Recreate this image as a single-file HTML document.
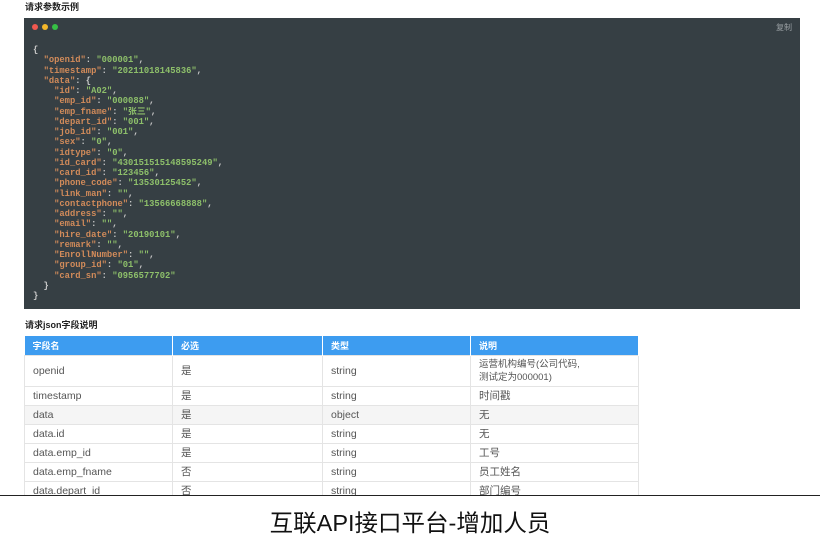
<!DOCTYPE html>
<html><head><meta charset="utf-8"><style>
*{margin:0;padding:0;box-sizing:border-box}
body{width:820px;height:540px;background:#fff;position:relative;overflow:hidden;font-family:"Liberation Sans","Noto Sans CJK SC",sans-serif}
.h{position:absolute;left:25px;font-size:9px;font-weight:bold;color:#222}
.code{position:absolute;left:24px;top:18px;width:776px;height:291px;background:#363f44}
.dot{position:absolute;top:6px;width:6px;height:6px;border-radius:50%}
.copy{position:absolute;right:8px;top:4px;font-size:8px;color:#9aa0a4}
pre{position:absolute;left:9px;top:27px;font-family:"Liberation Mono","Noto Sans CJK SC",monospace;font-size:8.8px;line-height:10.25px;color:#c9c9c9;font-weight:bold}
.k{color:#d28b5a}.v{color:#8dbf6a}
table{position:absolute;left:24px;top:336px;width:615px;border-collapse:collapse;font-size:10.5px;color:#555}
th{background:#3d9cf0;color:#fff;text-align:left;font-size:9px;height:19px;padding-left:8px;border-right:1px solid #fff}
td{padding-left:8px;border:1px solid #e4e4e4;height:19px;vertical-align:middle}
tr.g td{background:#f5f5f5}
.line{position:absolute;left:0;top:495px;width:820px;height:1px;background:#222}
.cap{position:absolute;left:0;width:820px;top:504px;text-align:center;font-size:23.5px;color:#111;font-family:"Liberation Sans","Noto Sans CJK SC",sans-serif}
.cut{position:absolute;left:0;top:496px;width:820px;height:44px;background:#fff}
</style></head><body>
<div class="h" style="top:0">请求参数示例</div>
<div class="code">
<div class="dot" style="left:8px;background:#f0584f"></div>
<div class="dot" style="left:18px;background:#f5b82a"></div>
<div class="dot" style="left:28px;background:#36c045"></div>
<div class="copy">复制</div>
<pre>{
  <span class="k">"openid"</span>: <span class="v">"000001"</span>,
  <span class="k">"timestamp"</span>: <span class="v">"20211018145836"</span>,
  <span class="k">"data"</span>: {
    <span class="k">"id"</span>: <span class="v">"A02"</span>,
    <span class="k">"emp_id"</span>: <span class="v">"000088"</span>,
    <span class="k">"emp_fname"</span>: <span class="v">"张三"</span>,
    <span class="k">"depart_id"</span>: <span class="v">"001"</span>,
    <span class="k">"job_id"</span>: <span class="v">"001"</span>,
    <span class="k">"sex"</span>: <span class="v">"0"</span>,
    <span class="k">"idtype"</span>: <span class="v">"0"</span>,
    <span class="k">"id_card"</span>: <span class="v">"430151515148595249"</span>,
    <span class="k">"card_id"</span>: <span class="v">"123456"</span>,
    <span class="k">"phone_code"</span>: <span class="v">"13530125452"</span>,
    <span class="k">"link_man"</span>: <span class="v">""</span>,
    <span class="k">"contactphone"</span>: <span class="v">"13566668888"</span>,
    <span class="k">"address"</span>: <span class="v">""</span>,
    <span class="k">"email"</span>: <span class="v">""</span>,
    <span class="k">"hire_date"</span>: <span class="v">"20190101"</span>,
    <span class="k">"remark"</span>: <span class="v">""</span>,
    <span class="k">"EnrollNumber"</span>: <span class="v">""</span>,
    <span class="k">"group_id"</span>: <span class="v">"01"</span>,
    <span class="k">"card_sn"</span>: <span class="v">"0956577702"</span>
  }
}</pre>
</div>
<div class="h" style="top:318px">请求json字段说明</div>
<table>
<tr><th style="width:148px">字段名</th><th style="width:150px">必选</th><th style="width:148px">类型</th><th>说明</th></tr>
<tr><td style="height:31px">openid</td><td>是</td><td>string</td><td style="font-size:9.5px;line-height:13px">运营机构编号(公司代码,<br>测试定为000001)</td></tr>
<tr><td>timestamp</td><td>是</td><td>string</td><td>时间戳</td></tr>
<tr class="g"><td>data</td><td>是</td><td>object</td><td>无</td></tr>
<tr><td>data.id</td><td>是</td><td>string</td><td>无</td></tr>
<tr><td>data.emp_id</td><td>是</td><td>string</td><td>工号</td></tr>
<tr><td>data.emp_fname</td><td>否</td><td>string</td><td>员工姓名</td></tr>
<tr><td>data.depart_id</td><td>否</td><td>string</td><td>部门编号</td></tr>
</table>
<div class="cut"></div>
<div class="line"></div>
<div class="cap">互联API接口平台-增加人员</div>
</body></html>
